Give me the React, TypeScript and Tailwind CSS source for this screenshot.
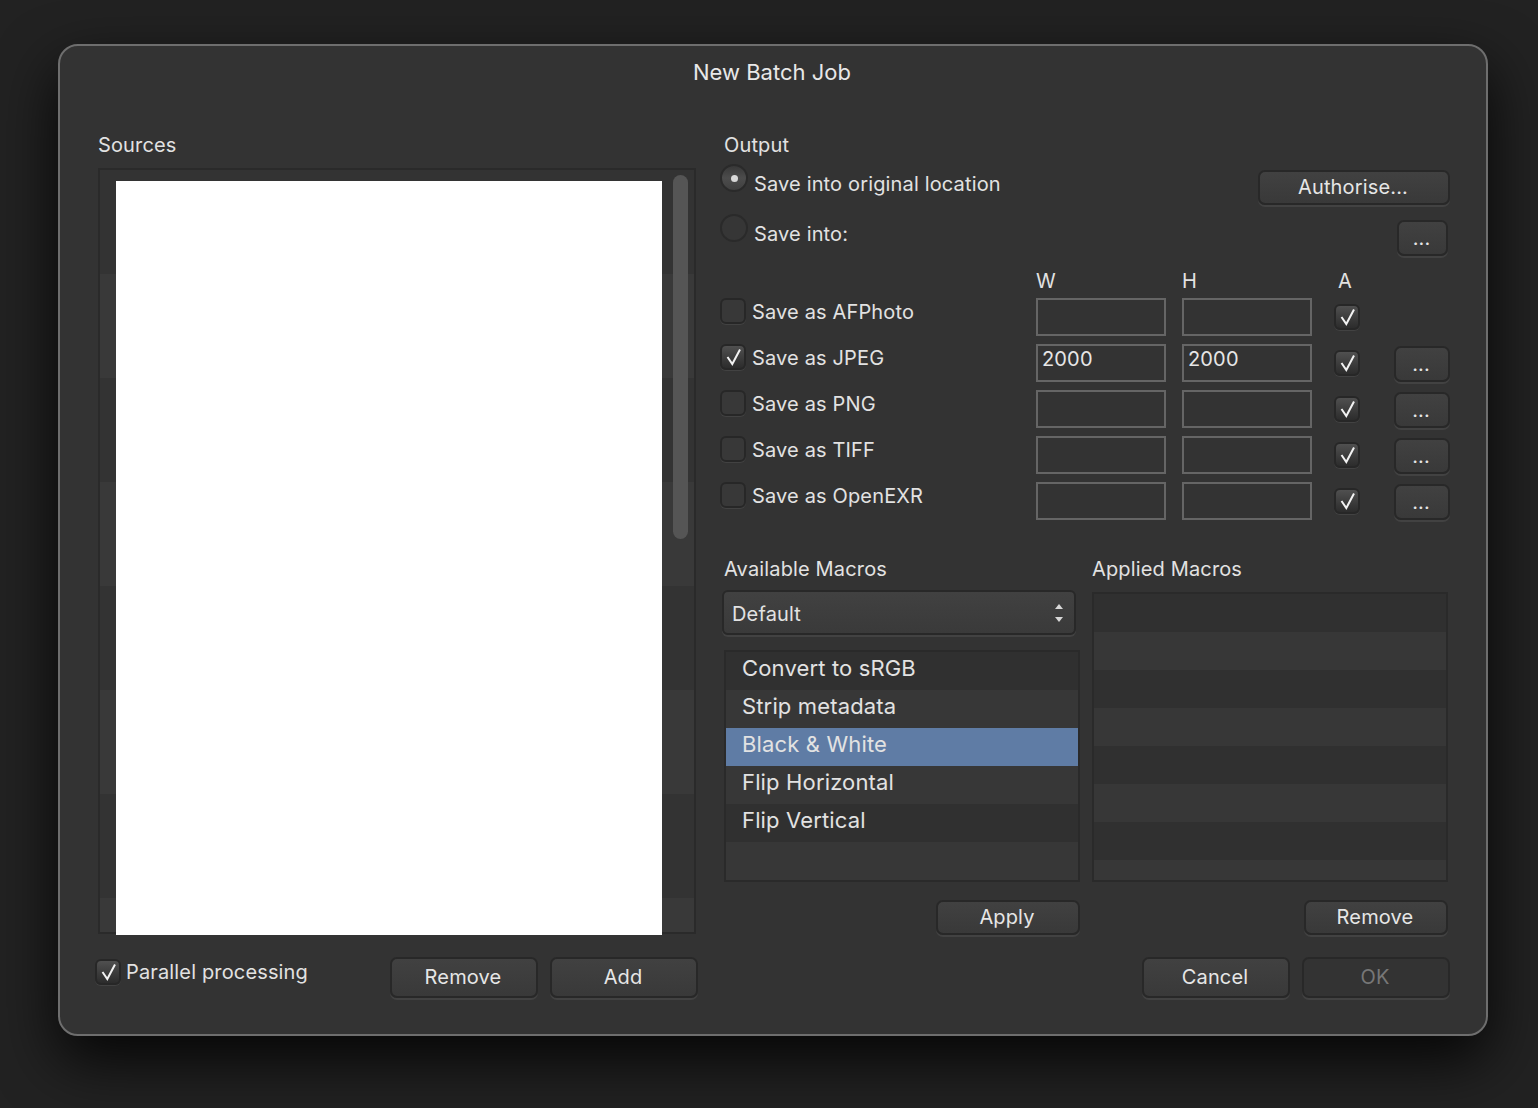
import React from 'react';

const Check = () => (
  <svg viewBox="0 0 26 26" className="w-[26px] h-[26px]">
    <polyline points="7.5,13 12.3,20 20,5.5" fill="none" stroke="#f2f2f2" strokeWidth="2" />
  </svg>
);

const CheckBox = ({ checked }: { checked?: boolean }) => (
  <div
    className={`w-[26px] h-[26px] shrink-0 rounded-[6px] border-2 border-[#272727] shadow-[0_1px_0_#424242] flex items-center justify-center ${
      checked ? 'bg-linear-to-b from-[#505050] to-[#2c2c2c]' : 'bg-[#383838]'
    }`}
  >
    {checked && <div className="-m-[2px]"><Check /></div>}
  </div>
);

const Radio = ({ selected }: { selected?: boolean }) => (
  <div
    className={`w-[28px] h-[28px] shrink-0 rounded-full border-2 border-[#2a2a2a] flex items-center justify-center ${
      selected ? 'bg-linear-to-b from-[#383838] via-[#4c4c4c] via-50% to-[#404040]' : 'bg-[#363636]'
    }`}
  >
    {selected && <div className="w-[7px] h-[7px] rounded-full bg-[#d8d8d8]" />}
  </div>
);

const Button = ({ label, className, disabled }: { label: string; className: string; disabled?: boolean }) => (
  <div
    className={`shrink-0 rounded-[7px] border-2 border-[#282828] shadow-[0_2px_0_#424242] flex items-center justify-center pb-[2px] pr-[2px] text-[20px] ${
      disabled ? 'bg-[#333333] text-[#777777]' : 'bg-linear-to-b from-[#414141] to-[#393939] text-[#e6e6e6]'
    } ${className}`}
  >
    {label}
  </div>
);

const Field = ({ value }: { value?: string }) => (
  <div className="w-[130px] h-[38px] border-2 border-[#656565] pl-[4px] text-[20px] leading-[26px] text-[#e6e6e6]">
    {value}
  </div>
);

const formats = [
  { name: 'Save as AFPhoto', more: false },
  { name: 'Save as JPEG', value: '2000', on: true, more: true },
  { name: 'Save as PNG', more: true },
  { name: 'Save as TIFF', more: true },
  { name: 'Save as OpenEXR', more: true },
];

const macros = ['Convert to sRGB', 'Strip metadata', 'Black & White', 'Flip Horizontal', 'Flip Vertical', ''];

export default function App() {
  return (
    <div className="w-[1538px] h-[1108px] overflow-hidden bg-[#222222] pl-[58px] pt-[44px] text-[#e2e2e2] font-['Inter','Liberation_Sans',sans-serif] text-[20px] tracking-[0.15px]">
      <div className="w-[1430px] h-[992px] rounded-[20px] border-2 border-[#6e6e6e] bg-[#333333] shadow-[0_24px_60px_rgba(0,0,0,0.85)] flex flex-col">
        {/* Title */}
        <div className="h-[52px] flex items-center justify-center text-[22px] tracking-normal text-[#e8e8e8] pr-[2px]">New Batch Job</div>

        <div className="flex pl-[38px] pt-[2px]">
          {/* Sources */}
          <div className="w-[622px] pt-[33px]">
            <div className="h-[24px] leading-[24px]">Sources</div>
            <div className="mt-[11px] w-[598px] h-[766px] border-2 border-[#2a2a2a] pl-[16px] flex items-start bg-[repeating-linear-gradient(180deg,#333333_0,#333333_104px,#393939_104px,#393939_208px)]">
              <div className="mt-[11px] w-[546px] h-[754px] bg-white shrink-0" />
              <div className="mt-[5px] ml-[11px] w-[15px] h-[364px] rounded-full bg-[#555555]" />
            </div>
            <div className="mt-[23px] flex items-start">
              <div className="-ml-[3px] mt-[2px]"><CheckBox checked /></div>
              <div className="ml-[5px] h-[30px] leading-[30px]">Parallel processing</div>
              <div className="flex-1" />
              <Button label="Remove" className="w-[148px] h-[41px] mr-[12px]" />
              <Button label="Add" className="w-[148px] h-[41px] mr-[22px]" />
            </div>
          </div>

          {/* Output */}
          <div className="w-[730px] pt-[33px]">
            <div className="h-[24px] leading-[24px] ml-[4px]">Output</div>
            <div className="flex h-[50px] items-start -mt-[26px] pt-[33px] box-content">
              <Radio selected />
              <div className="ml-[6px] mt-[6px] h-[28px] leading-[28px]">Save into original location</div>
              <div className="flex-1" />
              <Button label="Authorise..." className="w-[192px] h-[35px] mt-[6px]" />
            </div>
            <div className="flex h-[56px] items-start">
              <Radio />
              <div className="ml-[6px] mt-[6px] h-[28px] leading-[28px]">Save into:</div>
              <div className="flex-1" />
              <Button label="..." className="w-[51px] h-[36px] mt-[6px] mr-[2px] pt-[2px]" />
            </div>
            <div className="flex h-[28px] -mt-[3px] leading-[28px] items-center">
              <div className="w-[316px]" />
              <div className="w-[146px]">W</div>
              <div className="w-[156px]">H</div>
              <div>A</div>
            </div>
            <div className="mt-[3px] flex flex-col gap-[8px]">
              {formats.map((f) => (
                <div key={f.name} className="flex h-[38px]">
                  <CheckBox checked={f.on} />
                  <div className="ml-[6px] w-[284px] h-[28px] leading-[28px]">{f.name}</div>
                  <Field value={f.value} />
                  <div className="w-[16px]" />
                  <Field value={f.value} />
                  <div className="ml-[22px] mt-[6px]"><CheckBox checked /></div>
                  {f.more && <Button label="..." className="ml-[34px] w-[56px] h-[36px] mt-[2px] pt-[2px]" />}
                </div>
              ))}
            </div>

            {/* Macros */}
            <div className="mt-[37px] ml-[4px] flex">
              <div className="w-[356px]">
                <div className="h-[24px] leading-[24px]">Available Macros</div>
                <div className="mt-[9px] -ml-[2px] w-[354px] h-[45px] rounded-[6px] border-2 border-[#282828] bg-linear-to-b from-[#414141] to-[#3a3a3a] shadow-[0_2px_0_#424242] flex items-center justify-between pl-[8px] pr-[10px]">
                  <span className="pt-[2px]">Default</span>
                  <svg viewBox="0 0 10 20" className="w-[10px] h-[20px]">
                    <polygon points="5,1 9,6 1,6" fill="#d8d8d8" />
                    <polygon points="5,19 9,14 1,14" fill="#d8d8d8" />
                  </svg>
                </div>
                <div className="mt-[15px] w-[356px] h-[232px] border-2 border-[#2a2a2a] text-[22px] overflow-hidden">
                  {macros.map((m, i) => (
                    <div
                      key={i}
                      className={`h-[38px] leading-[32px] pl-[16px] ${
                        i === 2 ? 'bg-[#5f7ca5]' : i % 2 === 0 ? 'bg-[#303030]' : 'bg-[#373737]'
                      }`}
                    >
                      {m}
                    </div>
                  ))}
                </div>
              </div>
              <div className="ml-[12px] w-[356px]">
                <div className="h-[24px] leading-[24px]">Applied Macros</div>
                <div className="mt-[11px] h-[290px] border-2 border-[#2a2a2a] overflow-hidden">
                  {[0, 1, 2, 3, 4, 5, 6, 7].map((i) => (
                    <div key={i} className={`h-[38px] ${i % 2 === 0 ? 'bg-[#303030]' : 'bg-[#373737]'}`} />
                  ))}
                </div>
              </div>
            </div>
            <div className="mt-[18px] flex">
              <Button label="Apply" className="ml-[216px] w-[144px] h-[35px]" />
              <Button label="Remove" className="ml-[224px] w-[144px] h-[35px]" />
            </div>
            <div className="mt-[22px] flex justify-end gap-[12px]">
              <Button label="Cancel" className="w-[148px] h-[41px]" />
              <Button label="OK" disabled className="w-[148px] h-[41px]" />
            </div>
          </div>
        </div>
      </div>
    </div>
  );
}
